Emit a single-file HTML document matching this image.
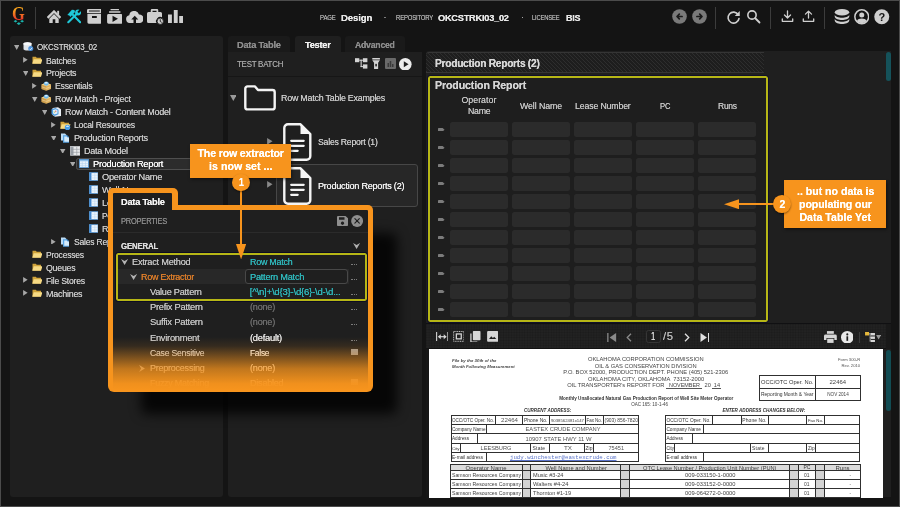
<!DOCTYPE html>
<html lang="en">
<head>
<meta charset="utf-8">
<title>Row Match - Data Table</title>
<style>
html,body{margin:0;padding:0;}
body{width:900px;height:507px;overflow:hidden;background:#141414;font-family:"Liberation Sans",sans-serif;}
#root{will-change:transform;position:relative;width:900px;height:507px;overflow:hidden;background:#141414;}
#root div,#root svg,#root span.t{position:absolute;}
span.t{white-space:pre;line-height:1;transform-origin:0 50%;text-shadow:0 0 0.6px currentColor;}
#doc span.t{text-shadow:none;}
#frame{left:0;top:0;width:898px;height:505px;border:1px solid #4b4b4b;pointer-events:none;}
#doc{left:428.5px;top:349px;width:454.5px;height:148.7px;background:#fff;overflow:hidden;}
#pop{left:0;top:0;width:900px;height:507px;}

</style>
</head>
<body>
<div id="root">
<svg style="left:13.00px;top:20.40px;" width="11.60" height="5.20" viewBox="0 0 24 11"><g fill="#19b5ae"><path d="M5 0l4 2.6-4 2.6-4-2.6z"/><path d="M19 0l4 2.6-4 2.6-4-2.6z"/><path d="M12 4.6l4.5 3-4.5 3-4.5-3z"/></g></svg>
<div style="left:35.00px;top:7.00px;width:1.00px;height:21.50px;background:#3c3c3c;"></div>
<svg style="left:46.50px;top:9.50px;" width="14.00" height="13.00" viewBox="0 0 14 13"><path d="M0.600 7.900L7 1.500l6.400 6.400" fill="none" stroke="#cfcfcf" stroke-width="2.300" stroke-linejoin="miter"/><rect x="10.200" y="0.800" width="1.900" height="4" fill="#cfcfcf"/><path fill="#cfcfcf" d="M2.300 8.700L7 4.100l4.700 4.600V13H8.300V9.200H5.700V13H2.300z"/></svg>
<svg style="left:66.50px;top:9.00px;" width="14.50" height="14.50" viewBox="0 0 14.500 14.500"><g stroke="#1fc8d8" stroke-width="2.100" stroke-linecap="round" fill="none"><path d="M1.300 13.200L9.800 4.700"/><path d="M13.200 13.200L5.600 5.600"/></g><circle cx="11.100" cy="3.500" r="3" fill="#1fc8d8"/><path d="M11.100 3.500L14.500 0.100" stroke="#141414" stroke-width="2" fill="none"/><path fill="#1fc8d8" d="M0.300 5.900L4.900 0.800l2.500 0.300 0.600 1.800-4.700 5.200-1-1.500z"/></svg>
<svg style="left:86.70px;top:9.20px;" width="14.80" height="14.70" viewBox="0 0 14.800 14.700"><path fill="#cfcfcf" fill-rule="evenodd" d="M1.200 0h12.400a1.200 1.200 0 0 1 1.200 1.200V4H0V1.200A1.200 1.200 0 0 1 1.200 0zM2 1.500v1.100h10.800V1.500zM0.400 4.800h14v8.500a1.400 1.400 0 0 1-1.400 1.400H1.800a1.400 1.400 0 0 1-1.400-1.400zM5 7v1.900h4.800V7z"/></svg>
<svg style="left:106.50px;top:9.00px;" width="15.50" height="14.80" viewBox="0 0 31 30"><path fill="#cfcfcf" fill-rule="evenodd" d="M7 0h17v2.500H7zM4 4.500h23v3H4zM3 10h25a3 3 0 0 1 3 3v14a3 3 0 0 1-3 3H3a3 3 0 0 1-3-3V13a3 3 0 0 1 3-3zM11 13.500v13l11-6.500z"/></svg>
<svg style="left:125.50px;top:11.30px;" width="17.50" height="12.10" viewBox="0 0 35 24"><path fill="#cfcfcf" fill-rule="evenodd" d="M8 24a8 8 0 0 1-1.500-15.800A10 10 0 0 1 26 7a8.500 8.500 0 0 1 1.500 17H20v-7h4.500L17.500 9.500 10.500 17H15v7z"/></svg>
<svg style="left:146.50px;top:9.00px;" width="17.00" height="16.00" viewBox="0 0 34 32"><path fill="#cfcfcf" fill-rule="evenodd" d="M10 0h10a2.500 2.500 0 0 1 2.500 2.500V6H27a3 3 0 0 1 3 3v7.500a8.500 8.500 0 0 0-11 11.500H3a3 3 0 0 1-3-3V9a3 3 0 0 1 3-3h4.500V2.500A2.500 2.500 0 0 1 10 0zM11 3.500V6h8V3.500z"/><circle cx="26.500" cy="24.500" r="6.300" fill="#cfcfcf" stroke="#141414" stroke-width="1.600"/><path d="M26.500 20.500v4.500l3 1.800" stroke="#141414" stroke-width="1.800" fill="none"/></svg>
<svg style="left:168.00px;top:9.90px;" width="15.10" height="13.20" viewBox="0 0 15.100 13.200"><path fill="#cfcfcf" d="M0 4.400h3.900v8.800H0zM5.800 0h3.900v13.200H5.800zM11.200 5.900h3.900v7.300h-3.900z"/></svg>
<svg style="left:671.50px;top:9.00px;" width="15.00" height="15.00" viewBox="-7.5 -7.5 15 15"><circle r="7.300" fill="#7a7a7a"/><path d="M2.600 0H-2.300M-0.200 -2.300L-2.500 0l2.300 2.300" stroke="#1a1a1a" stroke-width="1.700" fill="none" stroke-linecap="round" stroke-linejoin="round"/></svg>
<svg style="left:692.00px;top:9.00px;" width="15.00" height="15.00" viewBox="-7.5 -7.5 15 15"><circle r="7.300" fill="#7a7a7a"/><path d="M-2.600 0H2.300M0.200 -2.300L2.500 0l-2.300 2.300" stroke="#1a1a1a" stroke-width="1.700" fill="none" stroke-linecap="round" stroke-linejoin="round"/></svg>
<div style="left:715.00px;top:7.00px;width:1.00px;height:21.50px;background:#3c3c3c;"></div>
<div style="left:769.50px;top:7.00px;width:1.00px;height:21.50px;background:#3c3c3c;"></div>
<div style="left:823.50px;top:7.00px;width:1.00px;height:21.50px;background:#3c3c3c;"></div>
<svg style="left:726.00px;top:9.50px;" width="15.00" height="15.00" viewBox="0 0 30 30"><path d="M24.500 9.500A11 11 0 1 0 26 17" fill="none" stroke="#cfcfcf" stroke-width="3.200" stroke-linecap="round"/><path fill="#cfcfcf" d="M27.500 2v10h-10z"/></svg>
<svg style="left:746.00px;top:9.00px;" width="15.00" height="15.00" viewBox="0 0 30 30"><circle cx="12" cy="12" r="8.300" fill="none" stroke="#cfcfcf" stroke-width="3.200"/><path d="M18.500 18.500L27 27" stroke="#cfcfcf" stroke-width="3.600" stroke-linecap="round"/></svg>
<svg style="left:781.00px;top:10.40px;" width="13.00" height="12.60" viewBox="0 0 30 29"><g fill="none" stroke="#cfcfcf" stroke-width="3" stroke-linecap="round" stroke-linejoin="round"><path d="M15 2v16M8 11.500l7 7 7-7M3 20.500v5.500h24v-5.500"/></g></svg>
<svg style="left:801.50px;top:10.40px;" width="13.00" height="12.60" viewBox="0 0 30 29"><g fill="none" stroke="#cfcfcf" stroke-width="3" stroke-linecap="round" stroke-linejoin="round"><path d="M15 18.500V3M8 9.500l7-7 7 7M3 20.500v5.500h24v-5.500"/></g></svg>
<svg style="left:833.50px;top:9.00px;" width="16.00" height="15.00" viewBox="0 0 32 30"><g fill="#cfcfcf"><ellipse cx="16" cy="6.500" rx="14.500" ry="6.500"/><path d="M1.500 11.500c2 8 27 8 29 0v4c-2 8.500-27 8.500-29 0z"/><path d="M1.500 19.500c2 8 27 8 29 0v4c-2 8.500-27 8.500-29 0z"/></g></svg>
<svg style="left:853.50px;top:9.00px;" width="15.50" height="15.50" viewBox="0 0 31 31"><circle cx="15.500" cy="15.500" r="13.800" fill="none" stroke="#cfcfcf" stroke-width="3"/><circle cx="15.500" cy="12" r="5" fill="#cfcfcf"/><path fill="#cfcfcf" d="M6 24c2-6.500 17-6.500 19 0-5 5.500-14 5.500-19 0z"/></svg>
<svg style="left:874.00px;top:9.00px;" width="15.50" height="15.50" viewBox="0 0 31 31"><circle cx="15.500" cy="15.500" r="15" fill="#cfcfcf"/><text x="15.500" y="23.500" font-size="22" font-weight="bold" text-anchor="middle" fill="#141414" font-family="Liberation Sans, sans-serif">?</text></svg>
<div style="left:9.50px;top:36.00px;width:213.80px;height:461.00px;background:#1f1f1f;border-radius:3px;"></div>
<div style="left:76.20px;top:158.00px;width:141.80px;height:11.80px;background:#2c2c2c;border:1px solid #4f4f4f;border-radius:2.500px;box-sizing:border-box;"></div>
<svg style="left:22.60px;top:42.30px;" width="11.00" height="9.60" viewBox="0 0 22 19"><g><ellipse cx="9" cy="3.500" rx="8" ry="3" fill="#f0f3f7"/><path fill="#dfe4ea" d="M1 3.500h16v11c-1 3.500-15 3.500-16 0z"/><ellipse cx="9" cy="3.500" rx="8" ry="3" fill="#f7f9fb"/><circle cx="15.500" cy="13" r="5" fill="#4a90d9"/><path d="M13 13.500l2 2 3-4" stroke="#fff" stroke-width="1.500" fill="none"/></g></svg>
<svg style="left:13.50px;top:44.74px;" width="5.43" height="4.96" viewBox="0 0 10 9"><path fill="#a8a8a8" d="M0 0h10L5 9z"/></svg>
<svg style="left:31.90px;top:56.20px;" width="10.50" height="8.20" viewBox="0 0 21 16"><path fill="#cfa23a" d="M1 1.500h6.500l2 2H18v11.500H1z"/><path fill="#f6da84" d="M0.500 15.500L3.500 6.500h17.500l-3 9z"/></svg>
<svg style="left:23.10px;top:57.37px;" width="4.72" height="5.66" viewBox="0 0 8 10"><path fill="#a8a8a8" d="M0 0v10l8-5z"/></svg>
<svg style="left:31.90px;top:69.10px;" width="10.50" height="8.20" viewBox="0 0 21 16"><path fill="#cfa23a" d="M1 1.500h6.500l2 2H18v11.500H1z"/><path fill="#f6da84" d="M0.500 15.500L3.500 6.500h17.500l-3 9z"/></svg>
<svg style="left:22.80px;top:70.74px;" width="5.43" height="4.96" viewBox="0 0 10 9"><path fill="#a8a8a8" d="M0 0h10L5 9z"/></svg>
<svg style="left:41.20px;top:81.10px;" width="10.50" height="10.00" viewBox="0 0 21 20"><path fill="#e2b460" d="M1 7l9.500-3.500L20 7v9l-9.500 3.500L1 16z"/><path fill="#f3d28c" d="M1 7l9.500 3.500L20 7l-9.500-3.500z"/><path fill="#b98a3a" d="M10.500 10.500v9L1 16V7z" opacity=".5"/><path stroke="#f7e3b4" stroke-width="1" d="M1.500 11.500l9 3.300 9-3.300" fill="none"/><ellipse cx="10.500" cy="5.200" rx="5" ry="4.200" fill="#6db6e8"/><path fill="#e3f3fc" d="M7.500 4.800a3 2.600 0 0 1 6 0z"/></svg>
<svg style="left:32.40px;top:83.27px;" width="4.72" height="5.66" viewBox="0 0 8 10"><path fill="#a8a8a8" d="M0 0v10l8-5z"/></svg>
<svg style="left:41.20px;top:94.00px;" width="10.50" height="10.00" viewBox="0 0 21 20"><path fill="#e2b460" d="M1 7l9.500-3.500L20 7v9l-9.500 3.500L1 16z"/><path fill="#f3d28c" d="M1 7l9.500 3.500L20 7l-9.500-3.500z"/><path fill="#b98a3a" d="M10.500 10.500v9L1 16V7z" opacity=".5"/><path stroke="#f7e3b4" stroke-width="1" d="M1.500 11.500l9 3.300 9-3.300" fill="none"/><ellipse cx="10.500" cy="5.200" rx="5" ry="4.200" fill="#6db6e8"/><path fill="#e3f3fc" d="M7.500 4.800a3 2.600 0 0 1 6 0z"/></svg>
<svg style="left:32.10px;top:96.64px;" width="5.43" height="4.96" viewBox="0 0 10 9"><path fill="#a8a8a8" d="M0 0h10L5 9z"/></svg>
<svg style="left:50.70px;top:107.00px;" width="11.00" height="10.00" viewBox="0 0 22 20"><path fill="#e9eef4" d="M3 2l11-1.500 6 4V18l-12 1.500L3 16z"/><path fill="#4b9be0" d="M1 4.500L9 2l6 3.500v9L7 18l-6-4z"/><path fill="#fff" d="M4 6l6-1.500 3 2v6.500l-6 2-3-2.500z" opacity=".85"/><path fill="#e8563a" d="M8 7l3 1-1.500 3z"/><path fill="#7cc242" d="M5 9l2.500 0.500-1 3z"/></svg>
<svg style="left:41.60px;top:109.64px;" width="5.43" height="4.96" viewBox="0 0 10 9"><path fill="#a8a8a8" d="M0 0h10L5 9z"/></svg>
<svg style="left:60.00px;top:120.50px;" width="11.00" height="9.50" viewBox="0 0 22 19"><path fill="#cfa23a" d="M1 1.500h6.500l2 2H18v11.500H1z"/><path fill="#f6da84" d="M0.500 15.500L3.500 6.500h17.500l-3 9z"/><circle cx="15" cy="13" r="5.500" fill="#4a9ee6"/><path fill="#cfe7fb" d="M12 12a3 3 0 0 1 6 0z"/></svg>
<svg style="left:51.20px;top:122.17px;" width="4.72" height="5.66" viewBox="0 0 8 10"><path fill="#a8a8a8" d="M0 0v10l8-5z"/></svg>
<svg style="left:60.00px;top:132.90px;" width="11.00" height="10.50" viewBox="0 0 22 21"><path fill="#bcdcf5" d="M2 1h8l3 3v11H2z"/><path fill="#59a5e4" d="M6 4.500h8l4 4v11H6z"/><path fill="#d6ebfa" d="M8.500 7h7l2.500 2.500v8h-9.500z"/><path fill="#3d86c9" d="M14 4.500l4 4h-4z"/></svg>
<svg style="left:50.90px;top:135.54px;" width="5.43" height="4.96" viewBox="0 0 10 9"><path fill="#a8a8a8" d="M0 0h10L5 9z"/></svg>
<svg style="left:69.50px;top:146.10px;" width="10.50" height="9.60" viewBox="0 0 21 19"><rect x="1" y="0.500" width="19" height="18" fill="#e6e8ea"/><rect x="1" y="0.500" width="6" height="18" fill="#9aa0a8"/><path stroke="#8d939a" stroke-width="1.200" d="M1 6.500h19M1 12.500h19M13.500 0.500v18"/><rect x="1" y="0.500" width="19" height="18" fill="none" stroke="#d0d3d7" stroke-width="1"/></svg>
<svg style="left:60.40px;top:148.54px;" width="5.43" height="4.96" viewBox="0 0 10 9"><path fill="#a8a8a8" d="M0 0h10L5 9z"/></svg>
<svg style="left:79.30px;top:159.30px;" width="9.80" height="9.20" viewBox="0 0 21 19"><rect x="0.500" y="0.500" width="20" height="18" fill="#eaf3fc"/><rect x="0.500" y="0.500" width="20" height="4" fill="#8fbfea"/><path stroke="#b4d3f0" stroke-width="1.300" d="M0.500 9.500h20M0.500 14h20M7 5v13.500M14 5v13.500"/><rect x="0.800" y="0.800" width="19.400" height="17.400" fill="none" stroke="#4a8fd0" stroke-width="1.600"/></svg>
<svg style="left:69.70px;top:161.54px;" width="5.43" height="4.96" viewBox="0 0 10 9"><path fill="#a8a8a8" d="M0 0h10L5 9z"/></svg>
<svg style="left:88.70px;top:172.20px;" width="9.40" height="9.20" viewBox="0 0 21 19"><rect x="0.500" y="0.500" width="20" height="18" fill="#eef6fd"/><rect x="0.500" y="0.500" width="5" height="18" fill="#3f86cf"/><path stroke="#bdd9f3" stroke-width="1.300" d="M5.500 6.500h15M5.500 12.500h15M13 0.500v18"/><rect x="0.800" y="0.800" width="19.400" height="17.400" fill="none" stroke="#4a8fd0" stroke-width="1.600"/></svg>
<svg style="left:88.70px;top:185.10px;" width="9.40" height="9.20" viewBox="0 0 21 19"><rect x="0.500" y="0.500" width="20" height="18" fill="#eef6fd"/><rect x="0.500" y="0.500" width="5" height="18" fill="#3f86cf"/><path stroke="#bdd9f3" stroke-width="1.300" d="M5.500 6.500h15M5.500 12.500h15M13 0.500v18"/><rect x="0.800" y="0.800" width="19.400" height="17.400" fill="none" stroke="#4a8fd0" stroke-width="1.600"/></svg>
<svg style="left:88.70px;top:198.10px;" width="9.40" height="9.20" viewBox="0 0 21 19"><rect x="0.500" y="0.500" width="20" height="18" fill="#eef6fd"/><rect x="0.500" y="0.500" width="5" height="18" fill="#3f86cf"/><path stroke="#bdd9f3" stroke-width="1.300" d="M5.500 6.500h15M5.500 12.500h15M13 0.500v18"/><rect x="0.800" y="0.800" width="19.400" height="17.400" fill="none" stroke="#4a8fd0" stroke-width="1.600"/></svg>
<svg style="left:88.70px;top:211.00px;" width="9.40" height="9.20" viewBox="0 0 21 19"><rect x="0.500" y="0.500" width="20" height="18" fill="#eef6fd"/><rect x="0.500" y="0.500" width="5" height="18" fill="#3f86cf"/><path stroke="#bdd9f3" stroke-width="1.300" d="M5.500 6.500h15M5.500 12.500h15M13 0.500v18"/><rect x="0.800" y="0.800" width="19.400" height="17.400" fill="none" stroke="#4a8fd0" stroke-width="1.600"/></svg>
<svg style="left:88.70px;top:224.00px;" width="9.40" height="9.20" viewBox="0 0 21 19"><rect x="0.500" y="0.500" width="20" height="18" fill="#eef6fd"/><rect x="0.500" y="0.500" width="5" height="18" fill="#3f86cf"/><path stroke="#bdd9f3" stroke-width="1.300" d="M5.500 6.500h15M5.500 12.500h15M13 0.500v18"/><rect x="0.800" y="0.800" width="19.400" height="17.400" fill="none" stroke="#4a8fd0" stroke-width="1.600"/></svg>
<svg style="left:60.00px;top:236.50px;" width="11.00" height="10.50" viewBox="0 0 22 21"><path fill="#bcdcf5" d="M2 1h8l3 3v11H2z"/><path fill="#59a5e4" d="M6 4.500h8l4 4v11H6z"/><path fill="#d6ebfa" d="M8.500 7h7l2.500 2.500v8h-9.500z"/><path fill="#3d86c9" d="M14 4.500l4 4h-4z"/></svg>
<svg style="left:51.20px;top:238.67px;" width="4.72" height="5.66" viewBox="0 0 8 10"><path fill="#a8a8a8" d="M0 0v10l8-5z"/></svg>
<svg style="left:31.90px;top:250.40px;" width="10.50" height="8.20" viewBox="0 0 21 16"><path fill="#cfa23a" d="M1 1.500h6.500l2 2H18v11.500H1z"/><path fill="#f6da84" d="M0.500 15.500L3.500 6.500h17.500l-3 9z"/></svg>
<svg style="left:31.90px;top:263.30px;" width="10.50" height="8.20" viewBox="0 0 21 16"><path fill="#cfa23a" d="M1 1.500h6.500l2 2H18v11.500H1z"/><path fill="#f6da84" d="M0.500 15.500L3.500 6.500h17.500l-3 9z"/></svg>
<svg style="left:31.90px;top:276.30px;" width="10.50" height="8.20" viewBox="0 0 21 16"><path fill="#cfa23a" d="M1 1.500h6.500l2 2H18v11.500H1z"/><path fill="#f6da84" d="M0.500 15.500L3.500 6.500h17.500l-3 9z"/></svg>
<svg style="left:23.10px;top:277.47px;" width="4.72" height="5.66" viewBox="0 0 8 10"><path fill="#a8a8a8" d="M0 0v10l8-5z"/></svg>
<svg style="left:31.90px;top:289.20px;" width="10.50" height="8.20" viewBox="0 0 21 16"><path fill="#cfa23a" d="M1 1.500h6.500l2 2H18v11.500H1z"/><path fill="#f6da84" d="M0.500 15.500L3.500 6.500h17.500l-3 9z"/></svg>
<svg style="left:23.10px;top:290.37px;" width="4.72" height="5.66" viewBox="0 0 8 10"><path fill="#a8a8a8" d="M0 0v10l8-5z"/></svg>
<div style="left:227.50px;top:36.00px;width:62.70px;height:16.00px;background:#1a1a1a;border-radius:3px 3px 0 0;"></div>
<div style="left:345.30px;top:36.00px;width:59.70px;height:16.00px;background:#1a1a1a;border-radius:3px 3px 0 0;"></div>
<div style="left:295.20px;top:36.00px;width:45.60px;height:16.00px;background:#1f1f1f;border-radius:3px 3px 0 0;"></div>
<div style="left:227.50px;top:51.50px;width:194.50px;height:445.50px;background:#1f1f1f;border-radius:0 0 3px 3px;"></div>
<div style="left:227.50px;top:75.50px;width:194.50px;height:1.00px;background:#161616;"></div>
<svg style="left:355.30px;top:58.40px;" width="12.40" height="10.60" viewBox="0 0 12.400 10.600"><g fill="#d4d4d4"><rect x="0" y="0.200" width="4.300" height="4"/><rect x="7.900" y="0.200" width="4.500" height="4"/><rect x="7.900" y="6.400" width="4.500" height="4.200"/><rect x="4.300" y="1.700" width="3.600" height="1.100"/><rect x="5.600" y="1.700" width="1.100" height="7.400"/><rect x="5.600" y="8" width="2.300" height="1.100"/></g></svg>
<svg style="left:372.30px;top:58.30px;" width="8.20" height="11.20" viewBox="0 0 16 22"><g fill="#d4d4d4"><rect x="0.500" y="0" width="15" height="3"/><path d="M0.500 4.500h15l-3.500 5v12.500h-8V9.500z"/></g><rect x="6.500" y="11.500" width="3" height="5" fill="#1f1f1f"/></svg>
<svg style="left:385.40px;top:58.30px;" width="11.00" height="11.00" viewBox="0 0 22 22"><rect width="22" height="22" rx="2" fill="#6a6a6a"/><path fill="#3a3a3a" d="M5 10h3v8H5zM9.500 6h3v12h-3zM14 12h3v6h-3z"/></svg>
<svg style="left:399.30px;top:57.60px;" width="12.60" height="12.60" viewBox="0 0 25 25"><circle cx="12.500" cy="12.500" r="12.500" fill="#ececec"/><path fill="#1f1f1f" d="M9.500 6.500v12l9.500-6z"/></svg>
<svg style="left:229.50px;top:94.50px;" width="6.67" height="6.09" viewBox="0 0 10 9"><path fill="#9a9a9a" d="M0 0h10L5 9z"/></svg>
<svg style="left:244.00px;top:85.30px;" width="32.00" height="25.70" viewBox="0 0 32 25.700"><path d="M3.500 1.400h7.500l3 3.600h14.500a2.200 2.200 0 0 1 2.200 2.200v15a2.200 2.200 0 0 1-2.200 2.200h-25a2.200 2.200 0 0 1-2.200-2.200V3.600a2.200 2.200 0 0 1 2.200-2.200z" fill="none" stroke="#f4f4f4" stroke-width="2.400" stroke-linejoin="round"/></svg>
<svg style="left:267.30px;top:137.64px;" width="5.60" height="6.72" viewBox="0 0 8 10"><path fill="#8a8a8a" d="M0 0v10l8-5z"/></svg>
<svg style="left:283.20px;top:123.00px;" width="28.80" height="38.00" viewBox="0 0 28.800 38"><path d="M5 1.300h12.500l9.800 9.800V33a3.700 3.700 0 0 1-3.700 3.700H5A3.700 3.700 0 0 1 1.300 33V5A3.700 3.700 0 0 1 5 1.300z" fill="none" stroke="#f4f4f4" stroke-width="2.400" stroke-linejoin="round"/><path d="M17.500 1.300l9.800 9.800h-9.800z" fill="#f4f4f4"/><path d="M8.200 17.800h12.500M8.200 22.800h12.500M8.200 27.800h6.500" stroke="#f4f4f4" stroke-width="2.200" stroke-linecap="round"/></svg>
<div style="left:276.40px;top:164.10px;width:141.30px;height:43.10px;background:#272727;border:1px solid #474747;border-radius:3px;box-sizing:border-box;"></div>
<svg style="left:267.30px;top:181.44px;" width="5.60" height="6.72" viewBox="0 0 8 10"><path fill="#8a8a8a" d="M0 0v10l8-5z"/></svg>
<svg style="left:283.20px;top:166.90px;" width="28.80" height="38.00" viewBox="0 0 28.800 38"><path d="M5 1.300h12.500l9.800 9.800V33a3.700 3.700 0 0 1-3.700 3.700H5A3.700 3.700 0 0 1 1.300 33V5A3.700 3.700 0 0 1 5 1.300z" fill="none" stroke="#f4f4f4" stroke-width="2.400" stroke-linejoin="round"/><path d="M17.500 1.300l9.800 9.800h-9.800z" fill="#f4f4f4"/><path d="M8.200 17.800h12.500M8.200 22.800h12.500M8.200 27.800h6.500" stroke="#f4f4f4" stroke-width="2.200" stroke-linecap="round"/></svg>
<div style="left:425.50px;top:51.30px;width:465.50px;height:446.20px;background:#1f1f1f;border-radius:3px 0 0 0;"></div>
<div style="left:425.50px;top:51.50px;width:338.50px;height:21.50px;background:#262626;background-image:repeating-linear-gradient(45deg,#2e2e2e 0,#2e2e2e 1.200px,#1e1e1e 1.200px,#1e1e1e 2.830px);border-top:1px solid #353535;border-bottom:1px solid #353535;box-sizing:border-box;border-radius:3px 0 0 0;"></div>
<div style="left:886.00px;top:52.00px;width:5.00px;height:28.80px;background:#15525a;border-radius:2.500px;"></div>
<div style="left:428.00px;top:76.00px;width:340.40px;height:246.00px;background:#1e1e1e;border:2px solid #b6b616;outline:1px solid #10102a;border-radius:2px;box-sizing:border-box;"></div>
<div style="left:449.60px;top:122.20px;width:58.60px;height:14.80px;background:#2b2b2b;border-radius:2.500px;"></div>
<div style="left:511.60px;top:122.20px;width:58.60px;height:14.80px;background:#2b2b2b;border-radius:2.500px;"></div>
<div style="left:573.60px;top:122.20px;width:58.60px;height:14.80px;background:#2b2b2b;border-radius:2.500px;"></div>
<div style="left:635.60px;top:122.20px;width:58.60px;height:14.80px;background:#2b2b2b;border-radius:2.500px;"></div>
<div style="left:697.60px;top:122.20px;width:58.60px;height:14.80px;background:#2b2b2b;border-radius:2.500px;"></div>
<svg style="left:438.00px;top:127.90px;" width="6.60" height="3.50" viewBox="0 0 6.600 3.500"><path fill="#7c7c7c" d="M0 0.700Q0 0 0.700 0H4.600L6.600 1.750 4.600 3.500H0.700Q0 3.500 0 2.800z"/></svg>
<div style="left:449.60px;top:140.20px;width:58.60px;height:14.80px;background:#2b2b2b;border-radius:2.500px;"></div>
<div style="left:511.60px;top:140.20px;width:58.60px;height:14.80px;background:#2b2b2b;border-radius:2.500px;"></div>
<div style="left:573.60px;top:140.20px;width:58.60px;height:14.80px;background:#2b2b2b;border-radius:2.500px;"></div>
<div style="left:635.60px;top:140.20px;width:58.60px;height:14.80px;background:#2b2b2b;border-radius:2.500px;"></div>
<div style="left:697.60px;top:140.20px;width:58.60px;height:14.80px;background:#2b2b2b;border-radius:2.500px;"></div>
<svg style="left:438.00px;top:145.90px;" width="6.60" height="3.50" viewBox="0 0 6.600 3.500"><path fill="#7c7c7c" d="M0 0.700Q0 0 0.700 0H4.600L6.600 1.750 4.600 3.500H0.700Q0 3.500 0 2.800z"/></svg>
<div style="left:449.60px;top:158.20px;width:58.60px;height:14.80px;background:#2b2b2b;border-radius:2.500px;"></div>
<div style="left:511.60px;top:158.20px;width:58.60px;height:14.80px;background:#2b2b2b;border-radius:2.500px;"></div>
<div style="left:573.60px;top:158.20px;width:58.60px;height:14.80px;background:#2b2b2b;border-radius:2.500px;"></div>
<div style="left:635.60px;top:158.20px;width:58.60px;height:14.80px;background:#2b2b2b;border-radius:2.500px;"></div>
<div style="left:697.60px;top:158.20px;width:58.60px;height:14.80px;background:#2b2b2b;border-radius:2.500px;"></div>
<svg style="left:438.00px;top:163.90px;" width="6.60" height="3.50" viewBox="0 0 6.600 3.500"><path fill="#7c7c7c" d="M0 0.700Q0 0 0.700 0H4.600L6.600 1.750 4.600 3.500H0.700Q0 3.500 0 2.800z"/></svg>
<div style="left:449.60px;top:176.20px;width:58.60px;height:14.80px;background:#2b2b2b;border-radius:2.500px;"></div>
<div style="left:511.60px;top:176.20px;width:58.60px;height:14.80px;background:#2b2b2b;border-radius:2.500px;"></div>
<div style="left:573.60px;top:176.20px;width:58.60px;height:14.80px;background:#2b2b2b;border-radius:2.500px;"></div>
<div style="left:635.60px;top:176.20px;width:58.60px;height:14.80px;background:#2b2b2b;border-radius:2.500px;"></div>
<div style="left:697.60px;top:176.20px;width:58.60px;height:14.80px;background:#2b2b2b;border-radius:2.500px;"></div>
<svg style="left:438.00px;top:181.90px;" width="6.60" height="3.50" viewBox="0 0 6.600 3.500"><path fill="#7c7c7c" d="M0 0.700Q0 0 0.700 0H4.600L6.600 1.750 4.600 3.500H0.700Q0 3.500 0 2.800z"/></svg>
<div style="left:449.60px;top:194.20px;width:58.60px;height:14.80px;background:#2b2b2b;border-radius:2.500px;"></div>
<div style="left:511.60px;top:194.20px;width:58.60px;height:14.80px;background:#2b2b2b;border-radius:2.500px;"></div>
<div style="left:573.60px;top:194.20px;width:58.60px;height:14.80px;background:#2b2b2b;border-radius:2.500px;"></div>
<div style="left:635.60px;top:194.20px;width:58.60px;height:14.80px;background:#2b2b2b;border-radius:2.500px;"></div>
<div style="left:697.60px;top:194.20px;width:58.60px;height:14.80px;background:#2b2b2b;border-radius:2.500px;"></div>
<svg style="left:438.00px;top:199.90px;" width="6.60" height="3.50" viewBox="0 0 6.600 3.500"><path fill="#7c7c7c" d="M0 0.700Q0 0 0.700 0H4.600L6.600 1.750 4.600 3.500H0.700Q0 3.500 0 2.800z"/></svg>
<div style="left:449.60px;top:212.20px;width:58.60px;height:14.80px;background:#2b2b2b;border-radius:2.500px;"></div>
<div style="left:511.60px;top:212.20px;width:58.60px;height:14.80px;background:#2b2b2b;border-radius:2.500px;"></div>
<div style="left:573.60px;top:212.20px;width:58.60px;height:14.80px;background:#2b2b2b;border-radius:2.500px;"></div>
<div style="left:635.60px;top:212.20px;width:58.60px;height:14.80px;background:#2b2b2b;border-radius:2.500px;"></div>
<div style="left:697.60px;top:212.20px;width:58.60px;height:14.80px;background:#2b2b2b;border-radius:2.500px;"></div>
<svg style="left:438.00px;top:217.90px;" width="6.60" height="3.50" viewBox="0 0 6.600 3.500"><path fill="#7c7c7c" d="M0 0.700Q0 0 0.700 0H4.600L6.600 1.750 4.600 3.500H0.700Q0 3.500 0 2.800z"/></svg>
<div style="left:449.60px;top:230.20px;width:58.60px;height:14.80px;background:#2b2b2b;border-radius:2.500px;"></div>
<div style="left:511.60px;top:230.20px;width:58.60px;height:14.80px;background:#2b2b2b;border-radius:2.500px;"></div>
<div style="left:573.60px;top:230.20px;width:58.60px;height:14.80px;background:#2b2b2b;border-radius:2.500px;"></div>
<div style="left:635.60px;top:230.20px;width:58.60px;height:14.80px;background:#2b2b2b;border-radius:2.500px;"></div>
<div style="left:697.60px;top:230.20px;width:58.60px;height:14.80px;background:#2b2b2b;border-radius:2.500px;"></div>
<svg style="left:438.00px;top:235.90px;" width="6.60" height="3.50" viewBox="0 0 6.600 3.500"><path fill="#7c7c7c" d="M0 0.700Q0 0 0.700 0H4.600L6.600 1.750 4.600 3.500H0.700Q0 3.500 0 2.800z"/></svg>
<div style="left:449.60px;top:248.20px;width:58.60px;height:14.80px;background:#2b2b2b;border-radius:2.500px;"></div>
<div style="left:511.60px;top:248.20px;width:58.60px;height:14.80px;background:#2b2b2b;border-radius:2.500px;"></div>
<div style="left:573.60px;top:248.20px;width:58.60px;height:14.80px;background:#2b2b2b;border-radius:2.500px;"></div>
<div style="left:635.60px;top:248.20px;width:58.60px;height:14.80px;background:#2b2b2b;border-radius:2.500px;"></div>
<div style="left:697.60px;top:248.20px;width:58.60px;height:14.80px;background:#2b2b2b;border-radius:2.500px;"></div>
<svg style="left:438.00px;top:253.90px;" width="6.60" height="3.50" viewBox="0 0 6.600 3.500"><path fill="#7c7c7c" d="M0 0.700Q0 0 0.700 0H4.600L6.600 1.750 4.600 3.500H0.700Q0 3.500 0 2.800z"/></svg>
<div style="left:449.60px;top:266.20px;width:58.60px;height:14.80px;background:#2b2b2b;border-radius:2.500px;"></div>
<div style="left:511.60px;top:266.20px;width:58.60px;height:14.80px;background:#2b2b2b;border-radius:2.500px;"></div>
<div style="left:573.60px;top:266.20px;width:58.60px;height:14.80px;background:#2b2b2b;border-radius:2.500px;"></div>
<div style="left:635.60px;top:266.20px;width:58.60px;height:14.80px;background:#2b2b2b;border-radius:2.500px;"></div>
<div style="left:697.60px;top:266.20px;width:58.60px;height:14.80px;background:#2b2b2b;border-radius:2.500px;"></div>
<svg style="left:438.00px;top:271.90px;" width="6.60" height="3.50" viewBox="0 0 6.600 3.500"><path fill="#7c7c7c" d="M0 0.700Q0 0 0.700 0H4.600L6.600 1.750 4.600 3.500H0.700Q0 3.500 0 2.800z"/></svg>
<div style="left:449.60px;top:284.20px;width:58.60px;height:14.80px;background:#2b2b2b;border-radius:2.500px;"></div>
<div style="left:511.60px;top:284.20px;width:58.60px;height:14.80px;background:#2b2b2b;border-radius:2.500px;"></div>
<div style="left:573.60px;top:284.20px;width:58.60px;height:14.80px;background:#2b2b2b;border-radius:2.500px;"></div>
<div style="left:635.60px;top:284.20px;width:58.60px;height:14.80px;background:#2b2b2b;border-radius:2.500px;"></div>
<div style="left:697.60px;top:284.20px;width:58.60px;height:14.80px;background:#2b2b2b;border-radius:2.500px;"></div>
<svg style="left:438.00px;top:289.90px;" width="6.60" height="3.50" viewBox="0 0 6.600 3.500"><path fill="#7c7c7c" d="M0 0.700Q0 0 0.700 0H4.600L6.600 1.750 4.600 3.500H0.700Q0 3.500 0 2.800z"/></svg>
<div style="left:449.60px;top:302.20px;width:58.60px;height:14.80px;background:#2b2b2b;border-radius:2.500px;"></div>
<div style="left:511.60px;top:302.20px;width:58.60px;height:14.80px;background:#2b2b2b;border-radius:2.500px;"></div>
<div style="left:573.60px;top:302.20px;width:58.60px;height:14.80px;background:#2b2b2b;border-radius:2.500px;"></div>
<div style="left:635.60px;top:302.20px;width:58.60px;height:14.80px;background:#2b2b2b;border-radius:2.500px;"></div>
<div style="left:697.60px;top:302.20px;width:58.60px;height:14.80px;background:#2b2b2b;border-radius:2.500px;"></div>
<svg style="left:438.00px;top:307.90px;" width="6.60" height="3.50" viewBox="0 0 6.600 3.500"><path fill="#7c7c7c" d="M0 0.700Q0 0 0.700 0H4.600L6.600 1.750 4.600 3.500H0.700Q0 3.500 0 2.800z"/></svg>
<div style="left:425.50px;top:322.50px;width:465.50px;height:1.80px;background:#101012;"></div>
<div style="left:425.50px;top:324.30px;width:465.50px;height:24.70px;background:#222222;background-image:linear-gradient(rgba(0,0,0,0.110) 1px,transparent 1px),linear-gradient(90deg,rgba(0,0,0,0.110) 1px,transparent 1px);background-size:2.660px 2.660px;border-bottom:1.200px solid #121212;box-sizing:border-box;"></div>
<div style="left:885.80px;top:324.30px;width:5.20px;height:24.70px;background:#191919;"></div>
<div style="left:886.00px;top:349.70px;width:5.00px;height:61.00px;background:#124c53;border-radius:2.500px;"></div>
<div style="left:425.50px;top:349.00px;width:3.00px;height:148.50px;background:#161616;"></div>
<svg style="left:435.50px;top:332.00px;" width="12.50" height="9.40" viewBox="0 0 25 19"><g stroke="#d6d6d6" fill="none" stroke-width="2.200"><path d="M1.100 0v19M23.900 0v19"/><path d="M6 9.500h13" stroke-width="2.400"/></g><path fill="#d6d6d6" d="M3.500 9.500L9.500 4.500v10zM21.500 9.500L15.500 4.500v10z"/></svg>
<svg style="left:452.60px;top:331.20px;" width="11.60" height="10.80" viewBox="0 0 23 22"><rect x="1" y="1" width="21" height="20" fill="none" stroke="#d6d6d6" stroke-width="1.800" stroke-dasharray="2.200 1.400"/><rect x="6.500" y="6" width="10" height="10" fill="none" stroke="#d6d6d6" stroke-width="2.600"/></svg>
<svg style="left:470.00px;top:330.50px;" width="10.70" height="11.80" viewBox="0 0 21 24"><path d="M1.500 5v17.500h13" fill="none" stroke="#d6d6d6" stroke-width="2.600"/><rect x="5.500" y="0" width="15.500" height="19" rx="1.500" fill="#d6d6d6"/></svg>
<svg style="left:486.60px;top:331.30px;" width="11.40" height="10.70" viewBox="0 0 23 22"><rect width="23" height="22" rx="2" fill="#d6d6d6"/><path fill="#1c1c1c" d="M4 16.500l4.500-5.500 3.500 3.500 2.500-2.500 4.500 4.500z"/></svg>
<svg style="left:607.30px;top:332.50px;" width="9.70" height="9.00" viewBox="0 0 19 18"><path d="M1.500 0v18" stroke="#8a8a8a" stroke-width="2.600"/><path fill="#8a8a8a" d="M18 0v18L5 9z"/></svg>
<svg style="left:626.00px;top:332.50px;" width="6.00" height="9.00" viewBox="0 0 12 18"><path d="M10 1.500L2.500 9l7.500 7.500" fill="none" stroke="#8a8a8a" stroke-width="2.600"/></svg>
<div style="left:645.80px;top:329.50px;width:15.20px;height:13.50px;background:#1e1e1e;border:1px solid #363636;border-radius:2.500px;box-sizing:border-box;"></div>
<svg style="left:684.20px;top:332.50px;" width="6.00" height="9.00" viewBox="0 0 12 18"><path d="M2 1.500L9.500 9 2 16.500" fill="none" stroke="#e0e0e0" stroke-width="2.600"/></svg>
<svg style="left:699.60px;top:332.50px;" width="9.40" height="9.00" viewBox="0 0 19 18"><path d="M17.500 0v18" stroke="#e0e0e0" stroke-width="2.600"/><path fill="#e0e0e0" d="M1 0v18l13-9z"/></svg>
<svg style="left:823.80px;top:331.00px;" width="12.80" height="12.00" viewBox="0 0 26 24"><g fill="#d6d6d6"><rect x="6" y="0" width="14" height="5.500"/><path d="M3 7h20a3 3 0 0 1 3 3v8h-5v-4H5v4H0v-8a3 3 0 0 1 3-3z"/><rect x="6.500" y="15.500" width="13" height="8.500"/></g></svg>
<svg style="left:840.60px;top:330.80px;" width="12.60" height="12.60" viewBox="0 0 25 25"><circle cx="12.500" cy="12.500" r="12.500" fill="#e8e8e8"/><rect x="10.800" y="10.500" width="3.400" height="9" fill="#1c1c1c"/><circle cx="12.500" cy="6.700" r="2.100" fill="#1c1c1c"/></svg>
<div style="left:858.50px;top:331.50px;width:1.00px;height:11.50px;background:#3c3c3c;"></div>
<svg style="left:864.80px;top:331.80px;" width="10.00" height="10.40" viewBox="0 0 20 21"><g fill="#d8d8d8"><rect x="0" y="0" width="8" height="7" fill="#e6b93c"/><rect x="12" y="2" width="8" height="5"/><rect x="12" y="9" width="8" height="5"/><rect x="12" y="16" width="8" height="5"/><rect x="8" y="3" width="4" height="1.500"/><rect x="9.500" y="3" width="1.500" height="16"/><rect x="9.500" y="11" width="3" height="1.500"/><rect x="9.500" y="17.500" width="3" height="1.500"/></g></svg>
<svg style="left:875.50px;top:335.00px;" width="5.20" height="4.50" viewBox="0 0 10 9"><path fill="#9a9a9a" d="M0 0h10L5 9z"/></svg>
<span id="t0" class="t" style="left:12.40px;top:5.00px;font-size:18.70px;color:#f26a21;font-weight:bold;font-family:'Liberation Serif', serif;transform:scaleX(0.8799);background:linear-gradient(#f6a01c 25%,#e6262b 85%);-webkit-background-clip:text;background-clip:text;color:transparent;">G</span>
<span id="t1" class="t" style="left:320.00px;top:15.00px;font-size:6.50px;color:#aaa;letter-spacing:-0.182px;transform:scaleX(0.9209);">PAGE</span>
<span id="t2" class="t" style="left:341.00px;top:13.00px;font-size:9.60px;color:#e8e8e8;font-weight:bold;letter-spacing:-0.140px;">Design</span>
<span id="t3" class="t" style="left:383.50px;top:13.00px;font-size:9.00px;color:#aaa;">·</span>
<span id="t4" class="t" style="left:396.00px;top:15.00px;font-size:6.50px;color:#aaa;letter-spacing:-0.182px;transform:scaleX(0.9153);">REPOSITORY</span>
<span id="t5" class="t" style="left:438.30px;top:13.00px;font-size:9.60px;color:#e8e8e8;font-weight:bold;letter-spacing:-0.269px;transform:scaleX(0.9653);">OKCSTRKI03_02</span>
<span id="t6" class="t" style="left:521.00px;top:13.00px;font-size:9.00px;color:#aaa;">·</span>
<span id="t7" class="t" style="left:532.30px;top:15.00px;font-size:6.50px;color:#aaa;letter-spacing:-0.182px;transform:scaleX(0.8970);">LICENSEE</span>
<span id="t8" class="t" style="left:565.70px;top:13.00px;font-size:9.60px;color:#e8e8e8;font-weight:bold;letter-spacing:-0.269px;transform:scaleX(0.9442);">BIS</span>
<span id="t9" class="t" style="left:36.80px;top:43.00px;font-size:9.30px;color:#c8c8c8;letter-spacing:-0.260px;transform:scaleX(0.8567);">OKCSTRKI03_02</span>
<span id="t10" class="t" style="left:46.10px;top:57.00px;font-size:9.30px;color:#c8c8c8;letter-spacing:-0.260px;transform:scaleX(0.9397);">Batches</span>
<span id="t11" class="t" style="left:46.10px;top:69.00px;font-size:9.30px;color:#c8c8c8;letter-spacing:-0.260px;transform:scaleX(0.9631);">Projects</span>
<span id="t12" class="t" style="left:55.40px;top:82.00px;font-size:9.30px;color:#c8c8c8;letter-spacing:-0.260px;transform:scaleX(0.9393);">Essentials</span>
<span id="t13" class="t" style="left:55.40px;top:95.00px;font-size:9.30px;color:#c8c8c8;letter-spacing:-0.260px;transform:scaleX(0.9606);">Row Match - Project</span>
<span id="t14" class="t" style="left:64.90px;top:108.00px;font-size:9.30px;color:#c8c8c8;letter-spacing:-0.260px;transform:scaleX(0.9708);">Row Match - Content Model</span>
<span id="t15" class="t" style="left:74.20px;top:121.00px;font-size:9.30px;color:#c8c8c8;letter-spacing:-0.260px;transform:scaleX(0.9313);">Local Resources</span>
<span id="t16" class="t" style="left:74.20px;top:134.00px;font-size:9.30px;color:#c8c8c8;letter-spacing:-0.260px;transform:scaleX(0.9871);">Production Reports</span>
<span id="t17" class="t" style="left:83.70px;top:147.00px;font-size:9.30px;color:#c8c8c8;letter-spacing:-0.260px;transform:scaleX(0.9756);">Data Model</span>
<span id="t18" class="t" style="left:93.00px;top:160.00px;font-size:9.30px;color:#ffffff;letter-spacing:-0.260px;transform:scaleX(0.9948);">Production Report</span>
<span id="t19" class="t" style="left:102.00px;top:173.00px;font-size:9.30px;color:#c8c8c8;letter-spacing:-0.260px;transform:scaleX(0.9909);">Operator Name</span>
<span id="t20" class="t" style="left:102.00px;top:186.00px;font-size:9.30px;color:#c8c8c8;letter-spacing:-0.100px;">Well Name</span>
<span id="t21" class="t" style="left:102.00px;top:199.00px;font-size:9.30px;color:#c8c8c8;letter-spacing:-0.189px;">Lease Number</span>
<span id="t22" class="t" style="left:102.00px;top:212.00px;font-size:9.30px;color:#c8c8c8;letter-spacing:-0.260px;transform:scaleX(0.8688);">PC</span>
<span id="t23" class="t" style="left:102.00px;top:225.00px;font-size:9.30px;color:#c8c8c8;letter-spacing:-0.260px;transform:scaleX(0.9648);">Runs</span>
<span id="t24" class="t" style="left:74.20px;top:238.00px;font-size:9.30px;color:#c8c8c8;letter-spacing:-0.260px;transform:scaleX(0.9262);">Sales Reports</span>
<span id="t25" class="t" style="left:46.10px;top:251.00px;font-size:9.30px;color:#c8c8c8;letter-spacing:-0.260px;transform:scaleX(0.9220);">Processes</span>
<span id="t26" class="t" style="left:46.10px;top:264.00px;font-size:9.30px;color:#c8c8c8;letter-spacing:-0.260px;transform:scaleX(0.9469);">Queues</span>
<span id="t27" class="t" style="left:46.10px;top:277.00px;font-size:9.30px;color:#c8c8c8;letter-spacing:-0.260px;transform:scaleX(0.9347);">File Stores</span>
<span id="t28" class="t" style="left:46.10px;top:290.00px;font-size:9.30px;color:#c8c8c8;letter-spacing:-0.260px;transform:scaleX(0.9638);">Machines</span>
<span id="t29" class="t" style="left:237.00px;top:40.00px;font-size:9.60px;color:#8c8c8c;font-weight:bold;letter-spacing:-0.269px;transform:scaleX(0.9671);">Data Table</span>
<span id="t30" class="t" style="left:305.20px;top:40.00px;font-size:9.60px;color:#f2f2f2;font-weight:bold;letter-spacing:-0.269px;transform:scaleX(0.9645);">Tester</span>
<span id="t31" class="t" style="left:355.30px;top:40.00px;font-size:9.60px;color:#8c8c8c;font-weight:bold;letter-spacing:-0.269px;transform:scaleX(0.9073);">Advanced</span>
<span id="t32" class="t" style="left:236.80px;top:60.00px;font-size:8.80px;color:#a0a0a0;letter-spacing:-0.246px;transform:scaleX(0.8971);">TEST BATCH</span>
<span id="t33" class="t" style="left:280.90px;top:94.00px;font-size:9.30px;color:#c8c8c8;letter-spacing:-0.260px;transform:scaleX(0.9608);">Row Match Table Examples</span>
<span id="t34" class="t" style="left:318.20px;top:138.00px;font-size:9.30px;color:#c8c8c8;letter-spacing:-0.260px;transform:scaleX(0.9389);">Sales Report (1)</span>
<span id="t35" class="t" style="left:318.20px;top:182.00px;font-size:9.30px;color:#f4f4f4;letter-spacing:-0.260px;transform:scaleX(0.9823);">Production Reports (2)</span>
<span id="t36" class="t" style="left:435.00px;top:59.00px;font-size:10.30px;color:#d8d8d8;font-weight:bold;letter-spacing:-0.288px;transform:scaleX(0.9933);">Production Reports (2)</span>
<span id="t37" class="t" style="left:435.00px;top:80.00px;font-size:10.60px;color:#d4d4d4;font-weight:bold;letter-spacing:-0.106px;">Production Report</span>
<span id="t38" class="t" style="left:461.40px;top:96.00px;font-size:8.80px;color:#c4c4c4;letter-spacing:0.040px;">Operator</span>
<span id="t39" class="t" style="left:467.60px;top:107.00px;font-size:8.80px;color:#c4c4c4;letter-spacing:-0.246px;transform:scaleX(0.9943);">Name</span>
<span id="t40" class="t" style="left:520.00px;top:102.00px;font-size:8.80px;color:#c4c4c4;letter-spacing:-0.095px;">Well Name</span>
<span id="t41" class="t" style="left:575.10px;top:102.00px;font-size:8.80px;color:#c4c4c4;letter-spacing:-0.182px;">Lease Number</span>
<span id="t42" class="t" style="left:659.70px;top:102.00px;font-size:8.80px;color:#c4c4c4;letter-spacing:-0.246px;transform:scaleX(0.8675);">PC</span>
<span id="t43" class="t" style="left:717.70px;top:102.00px;font-size:8.80px;color:#c4c4c4;letter-spacing:-0.246px;transform:scaleX(0.9643);">Runs</span>
<span id="t44" class="t" style="left:650.80px;top:332.00px;font-size:10.00px;color:#dcdcdc;transform:scaleX(0.7551);">1</span>
<span id="t45" class="t" style="left:663.10px;top:332.00px;font-size:10.00px;color:#b8b8b8;letter-spacing:0.600px;transform:scaleX(1.1293);">/5</span>
<div id="doc">
<div style="left:237.50px;top:38.95px;width:36.10px;height:0.70px;background:#555;"></div>
<div style="left:283.80px;top:38.95px;width:8.60px;height:0.70px;background:#555;"></div>
<div style="left:330.90px;top:26.40px;width:101.40px;height:26.00px;border:1.00px solid #303030;box-sizing:border-box;"></div>
<div style="left:330.90px;top:38.90px;width:101.40px;height:1.00px;background:#303030;"></div>
<div style="left:386.50px;top:26.10px;width:1.00px;height:26.10px;background:#303030;"></div>
<div style="left:22.20px;top:66.20px;width:188.50px;height:47.00px;border:1.00px solid #303030;box-sizing:border-box;"></div>
<div style="left:22.20px;top:75.00px;width:188.50px;height:1.00px;background:#303030;"></div>
<div style="left:22.20px;top:84.20px;width:188.50px;height:1.00px;background:#303030;"></div>
<div style="left:22.20px;top:93.50px;width:188.50px;height:1.00px;background:#303030;"></div>
<div style="left:22.20px;top:103.00px;width:188.50px;height:1.00px;background:#303030;"></div>
<div style="left:66.50px;top:66.20px;width:1.00px;height:9.30px;background:#303030;"></div>
<div style="left:93.40px;top:66.20px;width:1.00px;height:9.30px;background:#303030;"></div>
<div style="left:120.30px;top:66.20px;width:1.00px;height:9.30px;background:#303030;"></div>
<div style="left:156.30px;top:66.20px;width:1.00px;height:9.30px;background:#303030;"></div>
<div style="left:174.00px;top:66.20px;width:1.00px;height:9.30px;background:#303030;"></div>
<div style="left:57.70px;top:75.50px;width:1.00px;height:9.20px;background:#303030;"></div>
<div style="left:48.30px;top:84.70px;width:1.00px;height:9.30px;background:#303030;"></div>
<div style="left:31.00px;top:94.00px;width:1.00px;height:9.50px;background:#303030;"></div>
<div style="left:101.70px;top:94.00px;width:1.00px;height:9.50px;background:#303030;"></div>
<div style="left:120.30px;top:94.00px;width:1.00px;height:9.50px;background:#303030;"></div>
<div style="left:155.00px;top:94.00px;width:1.00px;height:9.50px;background:#303030;"></div>
<div style="left:164.90px;top:94.00px;width:1.00px;height:9.50px;background:#303030;"></div>
<div style="left:57.70px;top:103.50px;width:1.00px;height:9.20px;background:#303030;"></div>
<div style="left:236.60px;top:66.20px;width:195.40px;height:47.00px;border:1.00px solid #303030;box-sizing:border-box;"></div>
<div style="left:236.60px;top:75.00px;width:195.40px;height:1.00px;background:#303030;"></div>
<div style="left:236.60px;top:84.20px;width:195.40px;height:1.00px;background:#303030;"></div>
<div style="left:236.60px;top:93.50px;width:195.40px;height:1.00px;background:#303030;"></div>
<div style="left:236.60px;top:103.00px;width:195.40px;height:1.00px;background:#303030;"></div>
<div style="left:283.30px;top:66.20px;width:1.00px;height:9.30px;background:#303030;"></div>
<div style="left:312.70px;top:66.20px;width:1.00px;height:9.30px;background:#303030;"></div>
<div style="left:339.60px;top:66.20px;width:1.00px;height:9.30px;background:#303030;"></div>
<div style="left:377.80px;top:66.20px;width:1.00px;height:9.30px;background:#303030;"></div>
<div style="left:395.10px;top:66.20px;width:1.00px;height:9.30px;background:#303030;"></div>
<div style="left:274.00px;top:75.50px;width:1.00px;height:9.20px;background:#303030;"></div>
<div style="left:263.00px;top:84.70px;width:1.00px;height:9.30px;background:#303030;"></div>
<div style="left:245.70px;top:94.00px;width:1.00px;height:9.50px;background:#303030;"></div>
<div style="left:321.40px;top:94.00px;width:1.00px;height:9.50px;background:#303030;"></div>
<div style="left:339.60px;top:94.00px;width:1.00px;height:9.50px;background:#303030;"></div>
<div style="left:377.80px;top:94.00px;width:1.00px;height:9.50px;background:#303030;"></div>
<div style="left:386.40px;top:94.00px;width:1.00px;height:9.50px;background:#303030;"></div>
<div style="left:274.00px;top:103.50px;width:1.00px;height:9.20px;background:#303030;"></div>
<div style="left:22.20px;top:115.30px;width:409.80px;height:6.30px;background:#dcdcdc;"></div>
<div style="left:93.60px;top:115.30px;width:8.60px;height:32.90px;background:#d4d4d4;"></div>
<div style="left:192.00px;top:115.30px;width:8.80px;height:32.90px;background:#d4d4d4;"></div>
<div style="left:360.90px;top:115.30px;width:8.70px;height:32.90px;background:#d4d4d4;"></div>
<div style="left:386.90px;top:115.30px;width:8.70px;height:32.90px;background:#d4d4d4;"></div>
<div style="left:22.20px;top:114.75px;width:409.80px;height:1.10px;background:#303030;"></div>
<div style="left:22.20px;top:121.05px;width:409.80px;height:1.10px;background:#303030;"></div>
<div style="left:22.20px;top:129.95px;width:409.80px;height:1.10px;background:#303030;"></div>
<div style="left:22.20px;top:138.85px;width:409.80px;height:1.10px;background:#303030;"></div>
<div style="left:22.20px;top:147.65px;width:409.80px;height:1.10px;background:#303030;"></div>
<div style="left:21.65px;top:114.80px;width:1.10px;height:33.90px;background:#303030;"></div>
<div style="left:93.05px;top:114.80px;width:1.10px;height:33.90px;background:#303030;"></div>
<div style="left:101.65px;top:114.80px;width:1.10px;height:33.90px;background:#303030;"></div>
<div style="left:191.45px;top:114.80px;width:1.10px;height:33.90px;background:#303030;"></div>
<div style="left:200.25px;top:114.80px;width:1.10px;height:33.90px;background:#303030;"></div>
<div style="left:360.35px;top:114.80px;width:1.10px;height:33.90px;background:#303030;"></div>
<div style="left:369.05px;top:114.80px;width:1.10px;height:33.90px;background:#303030;"></div>
<div style="left:386.35px;top:114.80px;width:1.10px;height:33.90px;background:#303030;"></div>
<div style="left:395.05px;top:114.80px;width:1.10px;height:33.90px;background:#303030;"></div>
<div style="left:431.45px;top:114.80px;width:1.10px;height:33.90px;background:#303030;"></div>
<span id="t46" class="t" style="left:23.50px;top:10.00px;font-size:4.34px;color:#444;font-weight:bold;font-style:italic;">File by the 30th of the</span>
<span id="t47" class="t" style="left:23.50px;top:16.00px;font-size:4.28px;color:#444;font-weight:bold;font-style:italic;letter-spacing:0.005px;">Month Following Measurement</span>
<span id="t48" class="t" style="left:159.50px;top:8.00px;font-size:5.76px;color:#444;letter-spacing:0.002px;">OKLAHOMA CORPORATION COMMISSION</span>
<span id="t49" class="t" style="left:166.20px;top:15.00px;font-size:5.77px;color:#444;letter-spacing:-0.003px;">OIL &amp; GAS CONSERVATION DIVISION</span>
<span id="t50" class="t" style="left:134.70px;top:21.00px;font-size:5.77px;color:#444;letter-spacing:-0.005px;">P.O. BOX 52000, PRODUCTION DEPT. PHONE (405) 521-2306</span>
<span id="t51" class="t" style="left:159.50px;top:28.00px;font-size:5.79px;color:#444;letter-spacing:-0.001px;">OKLAHOMA CITY, OKLAHOMA  73152-2000</span>
<span id="t52" class="t" style="left:138.70px;top:34.00px;font-size:5.78px;color:#444;letter-spacing:0.003px;">OIL TRANSPORTER&#x27;s REPORT FOR</span>
<span id="t53" class="t" style="left:240.50px;top:34.00px;font-size:5.43px;color:#444;letter-spacing:-0.004px;">NOVEMBER</span>
<span id="t54" class="t" style="left:276.00px;top:34.00px;font-size:5.67px;color:#444;letter-spacing:0.003px;">20</span>
<span id="t55" class="t" style="left:285.30px;top:34.00px;font-size:5.58px;color:#444;letter-spacing:-0.019px;">14</span>
<span id="t56" class="t" style="left:130.70px;top:48.00px;font-size:4.62px;color:#333;font-weight:bold;letter-spacing:-0.002px;">Monthly Unallocated Natural Gas Production Report of Well Site Meter Operator</span>
<span id="t57" class="t" style="left:202.70px;top:54.00px;font-size:4.54px;color:#444;letter-spacing:0.001px;">OAC 165: 10-1-46</span>
<span id="t58" class="t" style="left:409.50px;top:9.00px;font-size:4.17px;color:#555;letter-spacing:0.003px;">Form 300-R</span>
<span id="t59" class="t" style="left:412.90px;top:15.00px;font-size:4.20px;color:#555;letter-spacing:0.002px;">Rev. 2010</span>
<span id="t60" class="t" style="left:332.50px;top:31.00px;font-size:5.72px;color:#333;letter-spacing:-0.002px;">OCC/OTC Oper. No.</span>
<span id="t61" class="t" style="left:401.10px;top:31.00px;font-size:5.90px;color:#444;letter-spacing:0.002px;">22464</span>
<span id="t62" class="t" style="left:332.50px;top:44.00px;font-size:4.94px;color:#333;letter-spacing:-0.002px;">Reporting Month &amp; Year</span>
<span id="t63" class="t" style="left:398.80px;top:44.00px;font-size:4.59px;color:#444;letter-spacing:0.001px;">NOV 2014</span>
<span id="t64" class="t" style="left:95.50px;top:60.00px;font-size:4.56px;color:#333;font-weight:bold;font-style:italic;letter-spacing:0.008px;">CURRENT ADDRESS:</span>
<span id="t65" class="t" style="left:293.90px;top:60.00px;font-size:4.58px;color:#333;font-weight:bold;font-style:italic;letter-spacing:0.002px;">ENTER ADDRESS CHANGES BELOW:</span>
<span id="t66" class="t" style="left:23.50px;top:70.00px;font-size:4.58px;color:#333;letter-spacing:0.001px;">OCC/OTC Oper. No.</span>
<span id="t67" class="t" style="left:95.50px;top:70.00px;font-size:4.97px;color:#333;letter-spacing:0.010px;">Phone No.</span>
<span id="t68" class="t" style="left:158.00px;top:70.00px;font-size:4.43px;color:#333;letter-spacing:0.010px;">Fax No.</span>
<span id="t69" class="t" style="left:23.50px;top:79.00px;font-size:4.64px;color:#333;letter-spacing:0.007px;">Company Name</span>
<span id="t70" class="t" style="left:23.50px;top:88.00px;font-size:4.64px;color:#333;letter-spacing:0.005px;">Address</span>
<span id="t71" class="t" style="left:23.50px;top:98.00px;font-size:4.35px;color:#333;letter-spacing:0.005px;">City</span>
<span id="t72" class="t" style="left:104.00px;top:97.00px;font-size:4.99px;color:#333;letter-spacing:0.223px;">State</span>
<span id="t73" class="t" style="left:157.00px;top:97.00px;font-size:4.99px;color:#333;letter-spacing:0.047px;">Zip</span>
<span id="t74" class="t" style="left:23.50px;top:107.00px;font-size:4.65px;color:#333;letter-spacing:0.004px;">E-mail address</span>
<span id="t75" class="t" style="left:237.90px;top:70.00px;font-size:4.81px;color:#333;letter-spacing:0.007px;">OCC/OTC Oper. No.</span>
<span id="t76" class="t" style="left:313.76px;top:69.00px;font-size:4.99px;color:#333;letter-spacing:0.095px;">Phone No.</span>
<span id="t77" class="t" style="left:379.50px;top:70.00px;font-size:4.29px;color:#333;">Fax No.</span>
<span id="t78" class="t" style="left:237.90px;top:79.00px;font-size:4.79px;color:#333;letter-spacing:0.005px;">Company Name</span>
<span id="t79" class="t" style="left:237.90px;top:88.00px;font-size:4.53px;color:#333;letter-spacing:0.004px;">Address</span>
<span id="t80" class="t" style="left:237.90px;top:98.00px;font-size:4.41px;color:#333;letter-spacing:0.002px;">City</span>
<span id="t81" class="t" style="left:323.50px;top:97.00px;font-size:4.99px;color:#333;letter-spacing:0.223px;">State</span>
<span id="t82" class="t" style="left:379.50px;top:98.00px;font-size:4.67px;color:#333;letter-spacing:0.016px;">Zip</span>
<span id="t83" class="t" style="left:237.90px;top:107.00px;font-size:4.59px;color:#333;letter-spacing:0.004px;">E-mail address</span>
<span id="t84" class="t" style="left:72.50px;top:68.00px;font-size:6.12px;color:#555;">22464</span>
<span id="t85" class="t" style="left:122.50px;top:70.00px;font-size:4.28px;color:#444;letter-spacing:0.001px;">9038562481x147</span>
<span id="t86" class="t" style="left:176.00px;top:70.00px;font-size:4.91px;color:#444;letter-spacing:-0.005px;">(903) 856-7820</span>
<span id="t87" class="t" style="left:97.00px;top:78.00px;font-size:5.76px;color:#555;letter-spacing:0.001px;">EASTEX CRUDE COMPANY</span>
<span id="t88" class="t" style="left:97.00px;top:88.00px;font-size:5.87px;color:#555;">10907 STATE HWY 11 W</span>
<span id="t89" class="t" style="left:52.00px;top:97.00px;font-size:5.70px;color:#555;letter-spacing:0.002px;">LEESBURG</span>
<span id="t90" class="t" style="left:135.50px;top:96.00px;font-size:6.26px;color:#555;">TX</span>
<span id="t91" class="t" style="left:180.00px;top:97.00px;font-size:5.58px;color:#555;letter-spacing:-0.004px;">75451</span>
<span id="t92" class="t" style="left:81.50px;top:106.00px;font-size:5.73px;color:#5a73c9;font-family:'Liberation Mono', monospace;letter-spacing:0.004px;text-decoration:underline;">judy.winchester@eastexcrude.com</span>
<span id="t93" class="t" style="left:37.00px;top:117.00px;font-size:5.96px;color:#3a3a3a;letter-spacing:-0.003px;">Operator Name</span>
<span id="t94" class="t" style="left:117.00px;top:117.00px;font-size:5.78px;color:#3a3a3a;letter-spacing:0.004px;">Well Name and Number</span>
<span id="t95" class="t" style="left:214.50px;top:117.00px;font-size:5.69px;color:#3a3a3a;letter-spacing:-0.004px;">OTC Lease Number / Production Unit Number (PUN)</span>
<span id="t96" class="t" style="left:375.00px;top:116.00px;font-size:5.07px;color:#3a3a3a;letter-spacing:-0.047px;">PC</span>
<span id="t97" class="t" style="left:407.00px;top:116.00px;font-size:6.00px;color:#3a3a3a;letter-spacing:-0.005px;">Runs</span>
<span id="t98" class="t" style="left:23.50px;top:124.00px;font-size:5.20px;color:#444;letter-spacing:0.003px;">Samson Resources Company</span>
<span id="t99" class="t" style="left:104.50px;top:124.00px;font-size:5.61px;color:#444;letter-spacing:-0.006px;">Music #3-24</span>
<span id="t100" class="t" style="left:256.50px;top:124.00px;font-size:5.76px;color:#444;letter-spacing:-0.001px;">009-033150-1-0000</span>
<span id="t101" class="t" style="left:375.50px;top:125.00px;font-size:4.95px;color:#444;">01</span>
<span id="t102" class="t" style="left:421.00px;top:125.00px;font-size:4.49px;color:#666;">-</span>
<span id="t103" class="t" style="left:23.50px;top:133.00px;font-size:5.20px;color:#444;letter-spacing:0.003px;">Samson Resources Company</span>
<span id="t104" class="t" style="left:104.50px;top:133.00px;font-size:5.74px;color:#444;letter-spacing:0.001px;">Walters #4-24</span>
<span id="t105" class="t" style="left:256.50px;top:133.00px;font-size:5.76px;color:#444;letter-spacing:-0.001px;">009-033152-0-0000</span>
<span id="t106" class="t" style="left:375.50px;top:134.00px;font-size:4.95px;color:#444;">01</span>
<span id="t107" class="t" style="left:421.00px;top:134.00px;font-size:4.49px;color:#666;">-</span>
<span id="t108" class="t" style="left:23.50px;top:142.00px;font-size:5.20px;color:#444;letter-spacing:0.003px;">Samson Resources Company</span>
<span id="t109" class="t" style="left:104.50px;top:142.00px;font-size:5.56px;color:#444;letter-spacing:0.005px;">Thornton #1-19</span>
<span id="t110" class="t" style="left:256.50px;top:142.00px;font-size:5.76px;color:#444;letter-spacing:-0.001px;">009-064272-0-0000</span>
<span id="t111" class="t" style="left:375.50px;top:143.00px;font-size:4.95px;color:#444;">01</span>
<span id="t112" class="t" style="left:421.00px;top:143.00px;font-size:4.49px;color:#666;">-</span>
</div>
<div id="pop">
<div style="left:141.00px;top:233.00px;width:255.50px;height:180.50px;background:rgba(0,0,0,0.800);filter:blur(6px);border-radius:6px;"></div>
<div style="left:108.00px;top:187.80px;width:69.60px;height:27.20px;background:#f7941d;border-radius:5px 5px 0 0;"></div>
<div style="left:108.00px;top:204.70px;width:265.20px;height:187.30px;background:#f7941d;border-radius:0 5px 6px 6px;"></div>
<div style="left:113.40px;top:192.80px;width:58.90px;height:19.20px;background:#1f1f1f;border-radius:1px 1px 0 0;"></div>
<div style="left:113.40px;top:209.90px;width:254.30px;height:179.10px;background:#1f1f1f;border-radius:0 1px 0 0;"></div>
<div style="left:113.40px;top:231.50px;width:254.30px;height:1.00px;background:#2b2b2b;"></div>
<div style="left:117.00px;top:269.00px;width:232.00px;height:15.00px;background:#282828;"></div>
<div style="left:244.60px;top:269.30px;width:103.80px;height:14.30px;background:#1f1f1f;border:1px solid #484848;border-radius:3px;box-sizing:border-box;"></div>
<svg style="left:337.00px;top:216.00px;" width="11.00" height="10.20" viewBox="0 0 22 20"><path fill="#8f8f8f" fill-rule="evenodd" d="M2 0h15l5 4.500V18a2 2 0 0 1-2 2H2a2 2 0 0 1-2-2V2a2 2 0 0 1 2-2zM4 2.500v5h11v-5zM11 11a3.300 3.300 0 1 0 0.010 0z"/></svg>
<svg style="left:351.30px;top:214.90px;" width="12.20" height="11.90" viewBox="0 0 24 24"><circle cx="12" cy="12" r="12" fill="#8f8f8f"/><path d="M7.500 7.500l9 9M16.500 7.500l-9 9" stroke="#1f1f1f" stroke-width="2.300" stroke-linecap="round"/></svg>
<svg style="left:352.70px;top:243.30px;" width="7.20" height="6.00" viewBox="0 0 12 10"><path fill="#b0b0b0" d="M0 0l6 3.500L12 0 6 10z"/></svg>
<div style="left:351.30px;top:263.50px;width:1.40px;height:1.20px;background:#7c7c7c;"></div>
<div style="left:353.50px;top:263.50px;width:1.40px;height:1.20px;background:#7c7c7c;"></div>
<div style="left:355.70px;top:263.50px;width:1.40px;height:1.20px;background:#7c7c7c;"></div>
<div style="left:351.30px;top:278.90px;width:1.40px;height:1.20px;background:#7c7c7c;"></div>
<div style="left:353.50px;top:278.90px;width:1.40px;height:1.20px;background:#7c7c7c;"></div>
<div style="left:355.70px;top:278.90px;width:1.40px;height:1.20px;background:#7c7c7c;"></div>
<div style="left:351.30px;top:294.10px;width:1.40px;height:1.20px;background:#7c7c7c;"></div>
<div style="left:353.50px;top:294.10px;width:1.40px;height:1.20px;background:#7c7c7c;"></div>
<div style="left:355.70px;top:294.10px;width:1.40px;height:1.20px;background:#7c7c7c;"></div>
<div style="left:351.30px;top:308.90px;width:1.40px;height:1.20px;background:#7c7c7c;"></div>
<div style="left:353.50px;top:308.90px;width:1.40px;height:1.20px;background:#7c7c7c;"></div>
<div style="left:355.70px;top:308.90px;width:1.40px;height:1.20px;background:#7c7c7c;"></div>
<div style="left:351.30px;top:324.00px;width:1.40px;height:1.20px;background:#7c7c7c;"></div>
<div style="left:353.50px;top:324.00px;width:1.40px;height:1.20px;background:#7c7c7c;"></div>
<div style="left:355.70px;top:324.00px;width:1.40px;height:1.20px;background:#7c7c7c;"></div>
<div style="left:351.30px;top:339.90px;width:1.40px;height:1.20px;background:#7c7c7c;"></div>
<div style="left:353.50px;top:339.90px;width:1.40px;height:1.20px;background:#7c7c7c;"></div>
<div style="left:355.70px;top:339.90px;width:1.40px;height:1.20px;background:#7c7c7c;"></div>
<div style="left:351.40px;top:348.70px;width:6.70px;height:6.20px;background:#9c9c9c;"></div>
<div style="left:351.40px;top:378.70px;width:6.70px;height:6.20px;background:#9c9c9c;"></div>
<svg style="left:120.70px;top:258.60px;" width="7.20" height="6.00" viewBox="0 0 12 10"><path fill="#b4b4b4" d="M0 0l6 3.500L12 0 6 10z"/></svg>
<svg style="left:130.10px;top:274.00px;" width="7.20" height="6.00" viewBox="0 0 12 10"><path fill="#b4b4b4" d="M0 0l6 3.500L12 0 6 10z"/></svg>
<svg style="left:139.20px;top:364.80px;" width="6.00" height="7.00" viewBox="0 0 10 12"><path fill="#b4b4b4" d="M0 0l10 6-10 6 3.500-6z"/></svg>
<div style="left:116.30px;top:252.60px;width:251.00px;height:48.60px;background:transparent;border:2px solid #b6b616;outline:1px solid #0c0c22;border-radius:2px;box-sizing:border-box;"></div>
<div style="left:189.80px;top:144.20px;width:101.70px;height:33.50px;background:#f7941d;box-shadow:1px 1.500px 3px rgba(0,0,0,0.5);"></div>
<div style="left:240.00px;top:186.00px;width:2.00px;height:60.00px;background:#f7941d;"></div>
<svg style="left:236.00px;top:243.50px;" width="10.20" height="15.50" viewBox="0 0 10.200 15.500"><path fill="#f7941d" d="M0 0h10.200L5.100 15.500z"/></svg>
<div style="left:232.100px;top:173.500px;width:17.800px;height:17.800px;border-radius:50%;background:#f7941d;box-shadow:0 1px 2px rgba(0,0,0,0.45);"></div>
<div style="left:784.20px;top:180.30px;width:101.80px;height:47.70px;background:#f7941d;box-shadow:1px 1.500px 3px rgba(0,0,0,0.5);"></div>
<div style="left:736.00px;top:203.10px;width:39.00px;height:2.40px;background:#f7941d;"></div>
<svg style="left:723.50px;top:199.00px;" width="15.50" height="10.40" viewBox="0 0 15.500 10.200"><path fill="#f7941d" d="M15.500 0v10.200L0 5.100z"/></svg>
<div style="left:773.400px;top:195.300px;width:17.800px;height:17.800px;border-radius:50%;background:#f7941d;box-shadow:0 1px 2px rgba(0,0,0,0.45);"></div>
<span id="t113" class="t" style="left:120.80px;top:197.00px;font-size:9.80px;color:#f4f4f4;font-weight:bold;letter-spacing:-0.274px;transform:scaleX(0.9470);">Data Table</span>
<span id="t114" class="t" style="left:120.80px;top:217.00px;font-size:8.80px;color:#8a8a8a;letter-spacing:-0.246px;transform:scaleX(0.8504);">PROPERTIES</span>
<span id="t115" class="t" style="left:120.80px;top:241.00px;font-size:9.40px;color:#dcdcdc;font-weight:bold;letter-spacing:-0.263px;transform:scaleX(0.8404);">GENERAL</span>
<span id="t116" class="t" style="left:131.80px;top:257.00px;font-size:9.60px;color:#c2c2c2;letter-spacing:-0.269px;transform:scaleX(0.9617);">Extract Method</span>
<span id="t117" class="t" style="left:249.80px;top:257.00px;font-size:9.60px;color:#2fb9bd;letter-spacing:-0.269px;transform:scaleX(0.9294);">Row Match</span>
<span id="t118" class="t" style="left:141.20px;top:272.00px;font-size:9.60px;color:#de7e2a;letter-spacing:-0.269px;transform:scaleX(0.9347);">Row Extractor</span>
<span id="t119" class="t" style="left:249.80px;top:272.00px;font-size:9.60px;color:#2fb9bd;letter-spacing:-0.269px;transform:scaleX(0.9627);">Pattern Match</span>
<span id="t120" class="t" style="left:150.30px;top:287.00px;font-size:9.60px;color:#c2c2c2;letter-spacing:-0.269px;transform:scaleX(0.9576);">Value Pattern</span>
<span id="t121" class="t" style="left:249.80px;top:287.00px;font-size:9.60px;color:#2fb9bd;letter-spacing:-0.225px;">[^\n]+\d{3}-\d{6}-\d-\d...</span>
<span id="t122" class="t" style="left:150.30px;top:302.00px;font-size:9.60px;color:#c2c2c2;letter-spacing:-0.269px;transform:scaleX(0.9702);">Prefix Pattern</span>
<span id="t123" class="t" style="left:249.80px;top:302.00px;font-size:9.60px;color:#6c6c6c;letter-spacing:-0.269px;transform:scaleX(0.9549);">(none)</span>
<span id="t124" class="t" style="left:150.30px;top:317.00px;font-size:9.60px;color:#c2c2c2;letter-spacing:-0.269px;transform:scaleX(0.9828);">Suffix Pattern</span>
<span id="t125" class="t" style="left:249.80px;top:317.00px;font-size:9.60px;color:#6c6c6c;letter-spacing:-0.269px;transform:scaleX(0.9549);">(none)</span>
<span id="t126" class="t" style="left:150.30px;top:333.00px;font-size:9.60px;color:#c2c2c2;letter-spacing:-0.269px;transform:scaleX(0.9693);">Environment</span>
<span id="t127" class="t" style="left:249.80px;top:333.00px;font-size:9.60px;color:#e6e6e6;letter-spacing:-0.269px;transform:scaleX(0.9742);">(default)</span>
<span id="t128" class="t" style="left:150.30px;top:348.00px;font-size:9.60px;color:#c2c2c2;letter-spacing:-0.269px;transform:scaleX(0.9040);">Case Sensitive</span>
<span id="t129" class="t" style="left:249.80px;top:348.00px;font-size:9.60px;color:#e6e6e6;letter-spacing:-0.269px;transform:scaleX(0.8708);">False</span>
<span id="t130" class="t" style="left:150.30px;top:363.00px;font-size:9.60px;color:#c2c2c2;letter-spacing:-0.269px;transform:scaleX(0.9414);">Preprocessing</span>
<span id="t131" class="t" style="left:249.80px;top:363.00px;font-size:9.60px;color:#e6e6e6;letter-spacing:-0.269px;transform:scaleX(0.9549);">(none)</span>
<span id="t132" class="t" style="left:150.30px;top:378.00px;font-size:9.60px;color:#c2c2c2;letter-spacing:-0.269px;transform:scaleX(0.9295);">Fuzzy Matching</span>
<span id="t133" class="t" style="left:249.80px;top:378.00px;font-size:9.60px;color:#e6e6e6;letter-spacing:-0.269px;transform:scaleX(0.9503);">Disabled</span>
<span id="t134" class="t" style="left:197.50px;top:148.00px;font-size:10.60px;color:#fff;font-weight:bold;letter-spacing:-0.150px;">The row extractor</span>
<span id="t135" class="t" style="left:209.00px;top:161.00px;font-size:10.60px;color:#fff;font-weight:bold;letter-spacing:0.038px;">is now set ...</span>
<span id="t136" class="t" style="left:238.80px;top:178.00px;font-size:10.40px;color:#fff;font-weight:bold;transform:scaleX(0.8303);">1</span>
<span id="t137" class="t" style="left:797.00px;top:186.00px;font-size:10.60px;color:#fff;font-weight:bold;letter-spacing:-0.019px;">.. but no data is</span>
<span id="t138" class="t" style="left:799.00px;top:199.00px;font-size:10.60px;color:#fff;font-weight:bold;letter-spacing:-0.089px;">populating our</span>
<span id="t139" class="t" style="left:799.40px;top:212.00px;font-size:10.60px;color:#fff;font-weight:bold;letter-spacing:0.011px;">Data Table Yet</span>
<span id="t140" class="t" style="left:779.40px;top:200.00px;font-size:10.40px;color:#fff;font-weight:bold;">2</span>
<div style="left:113.40px;top:337.00px;width:254.30px;height:52.50px;background:transparent;background:linear-gradient(rgba(247,148,29,0) 0%,rgba(247,148,29,0.100) 17%,rgba(247,148,29,0.310) 31%,rgba(247,148,29,0.750) 60%,rgba(247,148,29,0.970) 88%,rgba(247,148,29,1) 100%);"></div>
</div>
<div id="frame"></div>
</div>
</body>
</html>
